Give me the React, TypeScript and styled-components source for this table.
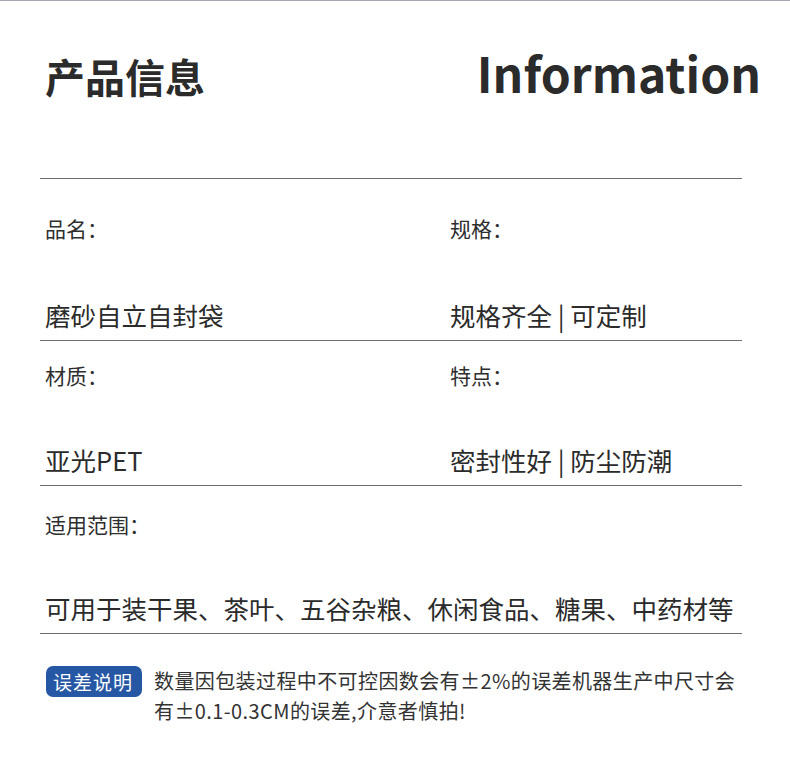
import React from "react"
import styled, { createGlobalStyle } from "styled-components"

const GlobalStyle = createGlobalStyle`
  html, body {
    margin: 0;
    padding: 0;
    background: #ffffff;
  }
  body {
    font-family: "Noto Sans CJK SC", "Noto Sans", sans-serif;
    color: #333333;
  }
`

const Page = styled.div`
  width: 790px;
  height: 759px;
  box-sizing: border-box;
  border-top: 1px solid #aaa4b4;
  background: #ffffff;
`

const Header = styled.header`
  height: 177px;
  box-sizing: border-box;
  padding: 47px 29px 0 45px;
  display: flex;
  justify-content: space-between;
  align-items: baseline;
`

const Title = styled.h1`
  margin: 0;
  font-size: 40px;
  line-height: 56px;
  font-weight: 700;
  color: #2b2b2b;
`

const EnTitle = styled.h2`
  margin: 0;
  font-size: 48px;
  line-height: 48px;
  font-weight: 700;
  color: #2b2b2b;
`

const Table = styled.section`
  margin: 0 48px 0 40px;
  border-top: 1px solid #6e6e6e;
`

const Row = styled.div<{ $top: number; $gap: number; $cols?: number }>`
  display: grid;
  grid-template-columns: ${({ $cols }) => ($cols === 1 ? "1fr" : "405px 1fr")};
  padding: ${({ $top }) => $top}px 0 8px 5px;
  border-bottom: 1px solid #6e6e6e;

  & > div {
    display: flex;
    flex-direction: column;
    gap: ${({ $gap }) => $gap}px;
  }
`

const Label = styled.span`
  font-size: 21px;
  line-height: 28px;
  color: #2e2e2e;
`

const Value = styled.span`
  font-size: 25.5px;
  line-height: 34px;
  color: #2b2b2b;
  white-space: nowrap;
`

const Note = styled.div`
  margin: 32px 48px 0 46px;
  display: flex;
  align-items: flex-start;
  gap: 12px;
`

const Badge = styled.span`
  flex: none;
  height: 31px;
  line-height: 31px;
  padding: 0 9px 0 7px;
  border-radius: 7px;
  background: #2557a5;
  color: #ffffff;
  font-size: 19px;
  letter-spacing: 1px;
`

const NoteText = styled.p`
  margin: 0;
  font-size: 20px;
  line-height: 30px;
  letter-spacing: 0.4px;
  color: #333333;
`

type Field = { label: string; value: string }

const rows: { top: number; gap: number; fields: Field[] }[] = [
  {
    top: 35,
    gap: 56,
    fields: [
      { label: "品名：", value: "磨砂自立自封袋" },
      { label: "规格：", value: "规格齐全 | 可定制" },
    ],
  },
  {
    top: 20,
    gap: 54,
    fields: [
      { label: "材质：", value: "亚光PET" },
      { label: "特点：", value: "密封性好 | 防尘防潮" },
    ],
  },
  {
    top: 24,
    gap: 53,
    fields: [
      {
        label: "适用范围：",
        value: "可用于装干果、茶叶、五谷杂粮、休闲食品、糖果、中药材等",
      },
    ],
  },
]

export default function App() {
  return (
    <>
      <GlobalStyle />
      <Page>
        <Header>
          <Title>产品信息</Title>
          <EnTitle>Information</EnTitle>
        </Header>
        <Table>
          {rows.map((row, i) => (
            <Row key={i} $top={row.top} $gap={row.gap} $cols={row.fields.length}>
              {row.fields.map((f) => (
                <div key={f.label}>
                  <Label>{f.label}</Label>
                  <Value>{f.value}</Value>
                </div>
              ))}
            </Row>
          ))}
        </Table>
        <Note>
          <Badge>误差说明</Badge>
          <NoteText>
            数量因包装过程中不可控因数会有±2%的误差机器生产中尺寸会有±0.1-0.3CM的误差,介意者慎拍!
          </NoteText>
        </Note>
      </Page>
    </>
  )
}
